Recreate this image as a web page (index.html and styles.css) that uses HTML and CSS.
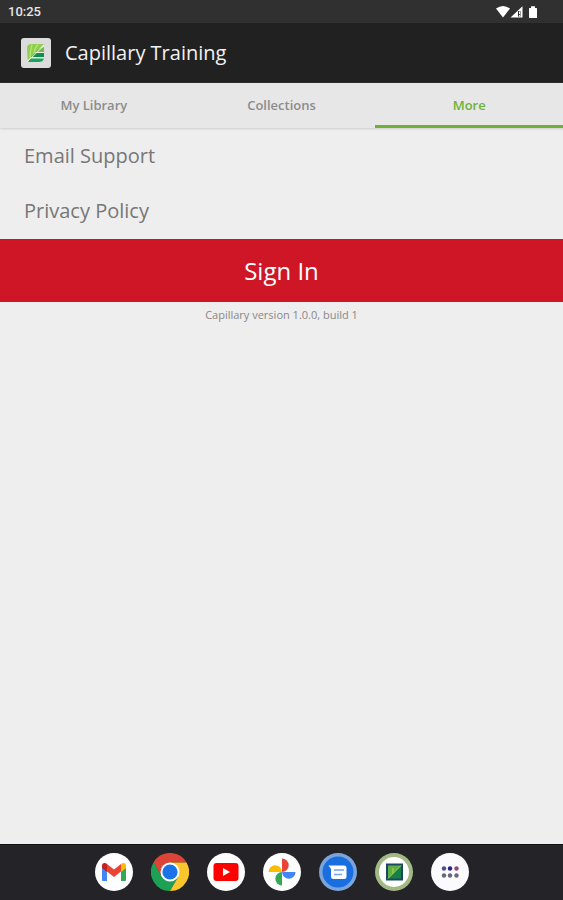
FILE: index.html
```html
<!DOCTYPE html>
<html lang="en">
<head>
<meta charset="utf-8">
<meta name="viewport" content="width=device-width, initial-scale=1">
<title>Capillary Training</title>
<link rel="stylesheet" href="styles.css">
</head>
<body>
<div class="status-bar">
  <span class="clock">10:25</span>
  <svg class="status-icons" viewBox="0 0 44 16" aria-hidden="true">
    <path d="M1 4.600Q8-.8 15 4.600L8 13.600Z" fill="#fff"/>
    <path d="M15.500 13.600L27.500 2.200V13.600Z" fill="#fff"/>
    <path d="M23 7h2.500v5.500H23z" fill="#303030"/>
    <path d="M24 7.500h1v2.500h-1zM24 11h1v1.500h-1z" fill="#fff"/>
    <path d="M34.500 4h1.500V2.200h4V4h1.500q.5 0 .5.500v9.100q0 .5-.5.500h-7q-.5 0-.5-.500V4.500q0-.5.500-.500z" fill="#fff"/>
  </svg>
</div>
<header class="app-bar">
  <svg class="app-logo" viewBox="0 0 30 30" aria-hidden="true">
    <rect width="30" height="30" rx="3" fill="#dcdcdc"/>
    <path d="M6 10Q6 6 10 6H23V19Q23 24 18 24H6Z" fill="#e8f0dc"/>
    <path d="M6 10Q6 6 10 6H23L6.500 22.500Z" fill="#8fcf4e"/>
    <path d="M11 6.500Q9 13 9 20M17 6.500Q13 11 13 16" stroke="#b9e37c" stroke-width="1.200" fill="none"/>
    <path d="M23 9V14H14.500Q18 10 23 9Z" fill="#72b84c"/>
    <path d="M14 15H23V19H10Z" fill="#138a51"/>
    <path d="M9 20.500H23Q22 24 18 24H7Z" fill="#19a35d"/>
    <path d="M7 23L23 7.500" stroke="#e8f6d5" stroke-width="1"/>
  </svg>
  <h1 class="app-title">Capillary Training</h1>
</header>
<nav class="tabs">
  <a class="tab" href="#library">My Library</a>
  <a class="tab" href="#collections">Collections</a>
  <a class="tab tab-active" href="#more" aria-current="page">More</a>
</nav>
<main class="content">
  <a class="row" href="#support">Email Support</a>
  <a class="row" href="#privacy">Privacy Policy</a>
  <button class="sign-in" type="button">Sign In</button>
  <p class="version">Capillary version 1.0.0, build 1</p>
</main>
<footer class="dock">
  <button class="dock-app" type="button" aria-label="Gmail">
    <svg viewBox="0 0 38 38">
      <circle cx="19" cy="19" r="19" fill="#fff"/>
      <path d="M7 14v13q0 1 1 1h4V16z" fill="#4285f4"/>
      <path d="M26 16v12h4q1 0 1-1V14z" fill="#34a853"/>
      <path d="M26 12v7l5-4v-2.500q0-2.500-2.500-2.500Q27 10 26 11z" fill="#fbbc04"/>
      <path d="M12 12v7l-5-4v-2.500Q7 10 9.500 10 11 10 12 11z" fill="#c5221f"/>
      <path d="M12 11l7 5.500 7-5.500v7.500l-7 5.500-7-5.500z" fill="#ea4335"/>
    </svg>
  </button>
  <button class="dock-app" type="button" aria-label="Chrome">
    <svg viewBox="0 0 38 38">
      <path d="M19 19L2.500 9.500A19 19 0 0 1 35.500 9.500H19z" fill="#db4437"/>
      <path d="M2.500 9.500A19 19 0 0 0 19 38L27.200 23.800 19 19 10.800 23.800z" fill="#1da154"/>
      <path d="M35.500 9.500A19 19 0 0 1 19 38L27.200 23.800 19 9.500z" fill="#fbc52d"/>
      <path d="M2.500 9.500L10.800 23.800 19 19V9.500z" fill="#db4437"/>
      <path d="M2.500 9.500L10.800 23.800 6 29A19 19 0 0 1 2.500 9.500z" fill="#1da154"/>
      <circle cx="19" cy="19" r="9.500" fill="#fff"/>
      <circle cx="19" cy="19" r="7.600" fill="#1a73e8"/>
    </svg>
  </button>
  <button class="dock-app" type="button" aria-label="YouTube">
    <svg viewBox="0 0 38 38">
      <circle cx="19" cy="19" r="19" fill="#fff"/>
      <rect x="6.500" y="10" width="25" height="18" rx="3" fill="#f00"/>
      <path d="M16 15l7 4-7 4z" fill="#fff"/>
    </svg>
  </button>
  <button class="dock-app" type="button" aria-label="Photos">
    <svg viewBox="0 0 38 38">
      <circle cx="19" cy="19" r="19" fill="#fff"/>
      <path d="M19 5.500a6.700 6.700 0 0 1 0 13.400z" fill="#ea4335"/>
      <path d="M32.500 19a6.700 6.700 0 0 1-13.400 0z" fill="#4285f4"/>
      <path d="M19 32.500a6.700 6.700 0 0 1 0-13.400z" fill="#34a853"/>
      <path d="M5.500 19a6.700 6.700 0 0 1 13.400 0z" fill="#fbbc04"/>
    </svg>
  </button>
  <button class="dock-app" type="button" aria-label="Messages">
    <svg viewBox="0 0 38 38">
      <circle cx="19" cy="19" r="19" fill="#7ba4dd"/>
      <circle cx="19" cy="19" r="15.500" fill="#1a6fe0"/>
      <path d="M9.500 12.500H25q2.500 0 2.500 2.500v8.500q0 2.500-2.500 2.500H14.500q-2.500 0-2.500-2.500V16z" fill="#fff"/>
      <path d="M15 17h10M15 21.500h8" stroke="#6fa4ee" stroke-width="1.500"/>
    </svg>
  </button>
  <button class="dock-app" type="button" aria-label="Capillary Training">
    <svg viewBox="0 0 38 38">
      <circle cx="19" cy="19" r="19" fill="#a3b985"/>
      <circle cx="19" cy="19" r="15" fill="#fff"/>
      <path d="M11 10.500h17v17H11z" fill="#1d4660"/>
      <path d="M13 12.500h13L13 25.500z" fill="#5fb044"/>
      <path d="M26 12.500v13H13z" fill="#13814a"/>
      <path d="M13 25.500L26 12.500M18 20.500V15" stroke="#b3d548" stroke-width="1"/>
    </svg>
  </button>
  <button class="dock-app" type="button" aria-label="All apps">
    <svg viewBox="0 0 38 38">
      <circle cx="19" cy="19" r="19" fill="#fbfafd"/>
      <circle cx="13" cy="15.500" r="2.200" fill="#4a4d94"/>
      <circle cx="19" cy="15.500" r="2.200" fill="#24208a"/>
      <circle cx="25.500" cy="15.500" r="2.200" fill="#8c4a72"/>
      <circle cx="13" cy="22.500" r="2.200" fill="#67677c"/>
      <circle cx="19" cy="22.500" r="2.200" fill="#67677c"/>
      <circle cx="25.500" cy="22.500" r="2.200" fill="#67677c"/>
    </svg>
  </button>
</footer>
</body>
</html>
```
FILE: styles.css
```css
* {
  box-sizing: border-box;
}

body {
  margin: 0;
  min-height: 100vh;
  display: flex;
  flex-direction: column;
  background: #eee;
  color: #777;
  font-family: "Open Sans", sans-serif;
}

a {
  color: inherit;
  text-decoration: none;
}

button {
  border: 0;
  padding: 0;
  font: inherit;
}

.status-bar {
  display: flex;
  align-items: center;
  justify-content: space-between;
  height: 23px;
  padding: 0 24px 0 8px;
  background: #303030;
}

.clock {
  color: #e6e6e6;
  font: 500 13px/24px Roboto, sans-serif;
}

.status-icons {
  width: 44px;
  height: 16px;
}

.app-bar {
  display: flex;
  align-items: center;
  gap: 14px;
  height: 60px;
  padding: 0 21px;
  background: #212121;
}

.app-logo {
  width: 30px;
  height: 30px;
}

.app-title {
  margin: 0;
  color: #f2f2f2;
  font-size: 20px;
  font-weight: 400;
  line-height: 28px;
}

.tabs {
  display: grid;
  grid-template-columns: repeat(3, 1fr);
  background: #e7e7e7;
  box-shadow: 0 1px 2px #ccc;
}

.tab {
  padding: 12px 0 10px;
  border-bottom: 3px solid transparent;
  font-size: 13px;
  font-weight: 600;
  line-height: 20px;
  text-align: center;
  color: #8c8c8c;
}

.tab-active {
  border-color: #6fb036;
  color: #6cb23a;
}

.content {
  flex: 1;
  display: flex;
  flex-direction: column;
  padding-top: 1px;
}

.row {
  padding: 13px 24px 14px;
  font-size: 20px;
  line-height: 28px;
}

.sign-in {
  height: 63px;
  background: #ce1626;
  color: #fff;
  font-size: 24px;
}

.version {
  margin: 5px 0;
  font-size: 11px;
  line-height: 16px;
  text-align: center;
  color: #888;
}

.dock {
  display: flex;
  align-items: center;
  justify-content: center;
  gap: 18px;
  height: 56px;
  padding-bottom: 1px;
  background: #242428;
  border-top: 1px solid #111;
}

.dock-app {
  width: 38px;
  height: 38px;
  border-radius: 50%;
  background: none;
}

.dock-app svg {
  display: block;
  width: 100%;
}
```
